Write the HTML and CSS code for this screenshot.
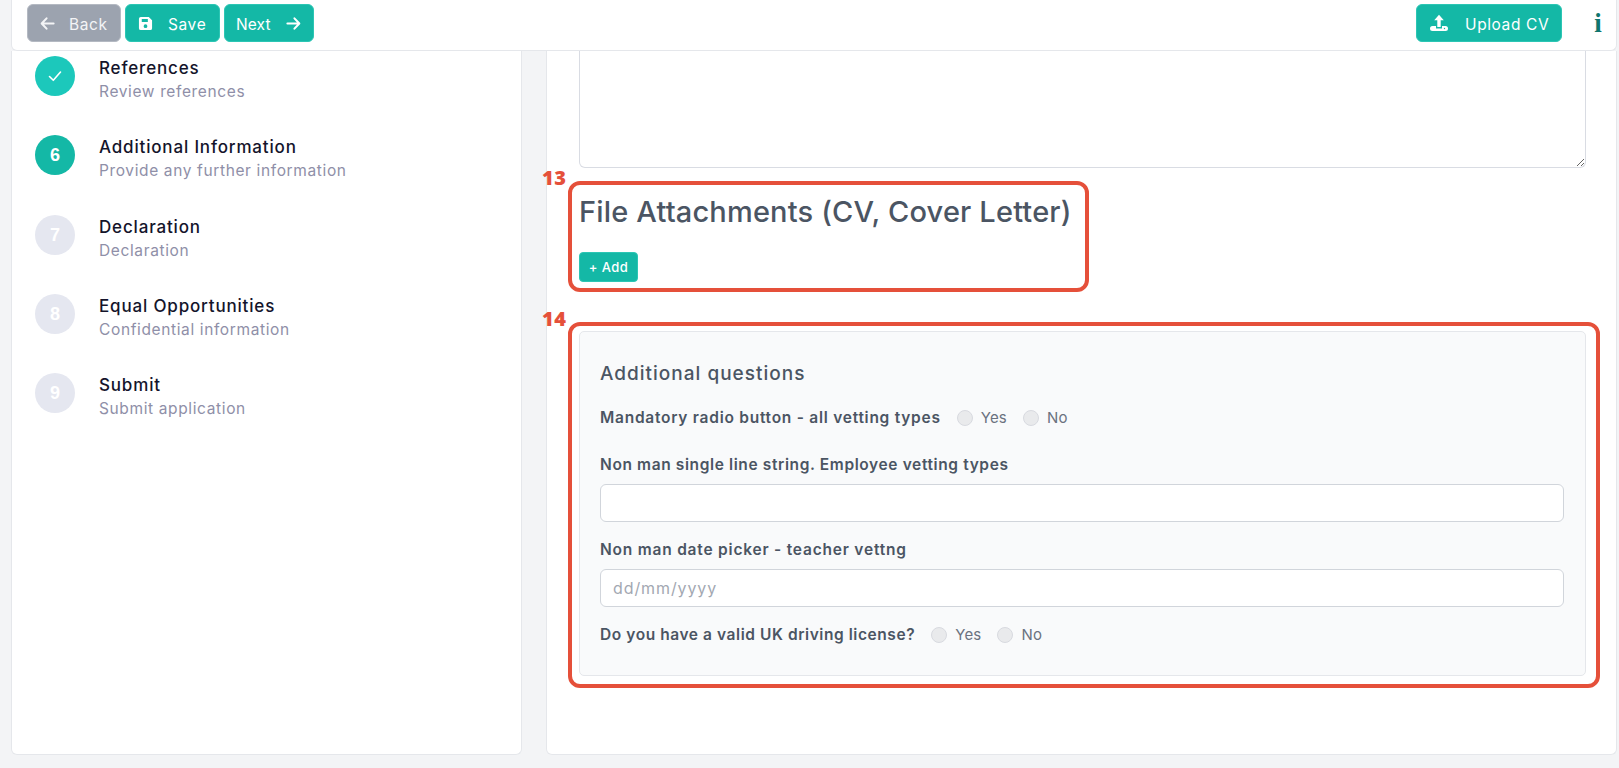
FILE: index.html
```html
<!DOCTYPE html>
<html lang="en">
<head>
<meta charset="utf-8">
<title>Additional Information</title>
<link rel="stylesheet" href="styles.css">
</head>
<body>
<header class="topbar">
  <div class="btn-group">
    <button class="btn btn-grey btn-back"><svg class="ico" viewBox="0 0 16 16"><path d="M7 2.500 1.800 8 7 13.500M2.200 8H14.500" fill="none" stroke="currentColor" stroke-width="2.200" stroke-linecap="round" stroke-linejoin="round"/></svg><span>Back</span></button>
    <button class="btn btn-save"><svg class="ico" viewBox="0 0 16 16"><path fill-rule="evenodd" d="M3 1h8.500L15 4.500V13a2 2 0 0 1-2 2H3a2 2 0 0 1-2-2V3a2 2 0 0 1 2-2ZM4 3.300v3.200h6.500V3.300ZM8 8.800a2 2 0 1 0 0 4 2 2 0 0 0 0-4Z" fill="currentColor"/></svg><span>Save</span></button>
    <button class="btn btn-next"><span>Next</span><svg class="ico" viewBox="0 0 16 16"><path d="M9 2.500 14.200 8 9 13.500M13.800 8H1.500" fill="none" stroke="currentColor" stroke-width="2.200" stroke-linecap="round" stroke-linejoin="round"/></svg></button>
  </div>
  <div class="top-right">
    <button class="btn btn-upload"><svg class="ico-up" viewBox="0 0 18 18"><path d="M9 .8 13.800 6.200H10.700V13H7.300V6.200H4.200Z" fill="currentColor"/><path fill-rule="evenodd" d="M2.500 12H6V14.500H12V12H15.500A2.500 2.500 0 0 1 15.500 17H2.500A2.500 2.500 0 0 1 2.500 12ZM14.500 13.800a.7.700 0 1 0 0 1.400.7.700 0 0 0 0-1.400Z" fill="currentColor"/></svg><span>Upload CV</span></button>
    <span class="info">i</span>
  </div>
</header>
<div class="layout">
  <aside class="sidebar">
    <div class="step"><div class="dot dot-done"><svg class="check" viewBox="0 0 16 16"><path d="M2.500 8.500 6.300 12.300 13.500 4" fill="none" stroke="#fff" stroke-width="1.600" stroke-linecap="round" stroke-linejoin="round"/></svg></div><div class="step-text"><div class="step-title">References</div><div class="step-sub">Review references</div></div></div>
    <div class="step"><div class="dot dot-current">6</div><div class="step-text"><div class="step-title">Additional Information</div><div class="step-sub">Provide any further information</div></div></div>
    <div class="step"><div class="dot">7</div><div class="step-text"><div class="step-title">Declaration</div><div class="step-sub">Declaration</div></div></div>
    <div class="step"><div class="dot">8</div><div class="step-text"><div class="step-title">Equal Opportunities</div><div class="step-sub">Confidential information</div></div></div>
    <div class="step"><div class="dot">9</div><div class="step-text"><div class="step-title">Submit</div><div class="step-sub">Submit application</div></div></div>
  </aside>
  <main class="main">
    <textarea class="notes"></textarea>
    <section class="attach marked">
      <span class="mark">13</span>
      <h2 class="attach-title">File Attachments (CV, Cover Letter)</h2>
      <button class="btn-add">+ Add</button>
    </section>
    <section class="questions-wrap marked">
      <span class="mark">14</span>
      <div class="panel">
        <h3 class="panel-title">Additional questions</h3>
        <div class="radio-row row-first"><span class="q q-mandatory">Mandatory radio button - all vetting types</span><span class="opt"><i class="radio"></i>Yes</span><span class="opt"><i class="radio"></i>No</span></div>
        <label class="q q-block q-second">Non man single line string. Employee vetting types</label>
        <div class="field"></div>
        <label class="q q-block q-third">Non man date picker - teacher vettng</label>
        <div class="field field-date">dd/mm/yyyy</div>
        <div class="radio-row row-last"><span class="q q-licence">Do you have a valid UK driving license?</span><span class="opt"><i class="radio"></i>Yes</span><span class="opt"><i class="radio"></i>No</span></div>
      </div>
    </section>
  </main>
</div>
</body>
</html>
```
FILE: styles.css
```css
* { box-sizing: border-box; }
html, body { margin: 0; height: 100%; }
body {
  background: #f3f4f6;
  font-family: Inter, "Noto Sans", sans-serif;
  width: 1619px;
  height: 768px;
  overflow: hidden;
  padding-left: 11px;
  padding-right: 2px;
  display: flex;
  flex-direction: column;
}
.topbar {
  height: 51px;
  flex: none;
  background: #fff;
  border: 1px solid #e5e7eb;
  border-top: 0;
  border-radius: 0 0 6px 6px;
  padding: 4px 5px 0 15px;
  display: flex;
  justify-content: space-between;
  align-items: flex-start;
}
.btn-group { display: flex; gap: 4px; }
.top-right { display: flex; align-items: flex-start; }
.btn {
  height: 38px;
  border: 1px solid #2cc6b4;
  border-radius: 6px;
  background: #14b8a6;
  color: #fff;
  font: 400 15.500px Inter, sans-serif;
  letter-spacing: .6px;
  display: flex;
  align-items: center;
  padding: 0;
}
.btn span { padding-top: 2px; }
.btn-grey { background: #9ca3af; border-color: #b4b9c2; }
.btn-back { width: 94px; padding-left: 12px; gap: 14px; color: #f3f4f6; }
.btn-save { width: 95px; padding-left: 12px; gap: 15px; }
.btn-next { width: 90px; padding-left: 11px; gap: 15px; letter-spacing: .1px; }
.btn-upload { width: 146px; padding-left: 13px; gap: 17px; }
.ico { width: 15px; height: 15px; flex: none; }
.ico-up { width: 18px; height: 18px; flex: none; }
.info {
  width: 26px;
  height: 38px;
  margin-left: 23px;
  text-align: center;
  font: 700 27px/38px "Liberation Serif", serif;
  color: #0f766e;
}
.layout {
  flex: 1;
  display: flex;
  gap: 24px;
  padding-bottom: 13px;
  min-height: 0;
}
.sidebar {
  width: 511px;
  flex: none;
  background: #fff;
  border: 1px solid #e5e7eb;
  border-top: 0;
  border-radius: 0 0 6px 6px;
  padding: 5px 0 0 23px;
}
.step { display: flex; height: 79.250px; gap: 24px; }
.dot {
  width: 40px;
  height: 40px;
  border-radius: 50%;
  background: #e5e7f0;
  color: #fff;
  font: 700 18px/40px "Liberation Sans", sans-serif;
  text-align: center;
  flex: none;
}
.dot-done { background: #1cc8bb; display: flex; align-items: center; justify-content: center; }
.dot-current { background: #14b8a6; }
.check { width: 16px; height: 16px; }
.step-title { font: 500 17px/24px Inter, sans-serif; color: #14142b; letter-spacing: .83px; white-space: nowrap; }
.step-sub { font: 400 15.500px/24px Inter, sans-serif; color: #8f8fa8; letter-spacing: .63px; white-space: nowrap; }
.main {
  flex: 1;
  min-width: 0;
  background: #fff;
  border: 1px solid #e5e7eb;
  border-top: 0;
  border-radius: 0 0 6px 6px;
  padding: 0 30px 0 32px;
}
.notes {
  display: block;
  width: 100%;
  height: 117px;
  border: 1px solid #d9dce3;
  border-top: 0;
  border-radius: 0 0 6px 6px;
  background: #fff;
  outline: 0;
}
.marked { position: relative; border: 4px solid #e5503a; border-radius: 12px; background: #fff; }
.mark {
  position: absolute;
  left: -30px;
  top: -17px;
  font: 800 20px/20px "Open Sans", sans-serif;
  letter-spacing: .5px;
  color: #e5503a;
}
.attach {
  margin: 13px 0 0 -11px;
  width: 521px;
  height: 111px;
  padding: 8px 0 0 7px;
}
.attach-title {
  margin: 0;
  font: 500 29px/38px Inter, sans-serif;
  letter-spacing: .17px;
  color: #4b5563;
  white-space: nowrap;
}
.btn-add {
  display: block;
  margin-top: 21px;
  width: 59px;
  height: 30px;
  background: #14b8a6;
  color: #fff;
  border: 1px solid #2cc6b4;
  border-radius: 4px;
  font: 500 13px Inter, sans-serif;
  letter-spacing: .4px;
  padding: 0;
}
.questions-wrap {
  margin: 30px -14px 0 -11px;
  height: 366px;
  padding: 5px 10px 8px 7px;
}
.panel {
  height: 345px;
  background: #f9fafb;
  border: 1px solid #e5e7eb;
  border-radius: 5px;
  padding: 28px 21px 0 20px;
}
.panel-title { margin: 0; font: 500 19px/28px Inter, sans-serif; letter-spacing: 1px; color: #4b5563; white-space: nowrap; }
.q { font: 600 15.500px/24px Inter, sans-serif; letter-spacing: .62px; color: #4b5563; white-space: nowrap; }
.q-block { display: block; }
.q-mandatory { letter-spacing: .74px; }
.q-licence { letter-spacing: .57px; }
.q-third { letter-spacing: .79px; margin-top: 16px; }
.radio-row { display: flex; align-items: center; height: 24px; }
.row-first { margin-top: 18px; }
.q-second { margin-top: 23px; }
.row-last { margin-top: 16px; }
.opt { display: flex; align-items: center; margin-left: 16px; font: 400 15px/24px Inter, sans-serif; letter-spacing: .2px; color: #6b7280; }
.radio {
  width: 16px;
  height: 16px;
  margin-right: 8px;
  border-radius: 50%;
  background: #e9eaec;
  border: 1px solid #d8dae0;
}
.field {
  height: 38px;
  margin-top: 7px;
  background: #fff;
  border: 1px solid #d1d5db;
  border-radius: 6px;
  padding-left: 12px;
  font: 400 16px/37px Inter, sans-serif;
  letter-spacing: .9px;
  color: #a3a8b2;
}
```
